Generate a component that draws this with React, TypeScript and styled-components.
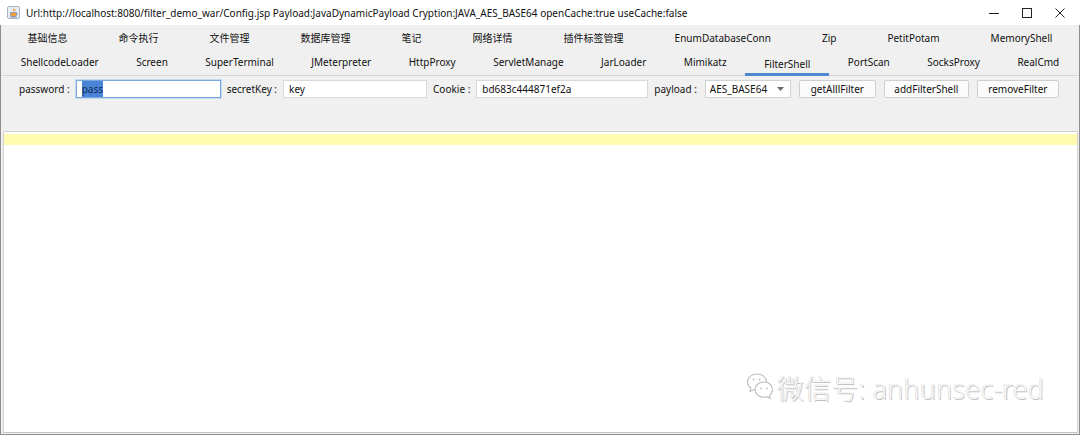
import styled, { createGlobalStyle } from "styled-components";

const GlobalStyle = createGlobalStyle`
  html, body {
    margin: 0;
    padding: 0;
    background: #ffffff;
  }
  body {
    font-family: "Noto Sans", "Noto Sans CJK SC", sans-serif;
    color: #000;
  }
`;

const row1 = [
  "基础信息",
  "命令执行",
  "文件管理",
  "数据库管理",
  "笔记",
  "网络详情",
  "插件标签管理",
  "EnumDatabaseConn",
  "Zip",
  "PetitPotam",
  "MemoryShell",
];

const row2 = [
  "ShellcodeLoader",
  "Screen",
  "SuperTerminal",
  "JMeterpreter",
  "HttpProxy",
  "ServletManage",
  "JarLoader",
  "Mimikatz",
  "FilterShell",
  "PortScan",
  "SocksProxy",
  "RealCmd",
];

const JavaIcon = () => (
  <svg width="13" height="13" viewBox="0 0 13 13">
    <rect x="0.5" y="0.5" width="12" height="12" rx="1.5" fill="#e9eef5" stroke="#a9b4c2" />
    <path d="M6.5 2.5c-1 1 1 1.6 0 2.8M8 3c-.7.7.6 1.1 0 2" stroke="#e07a1f" strokeWidth="0.9" fill="none" />
    <path d="M3.5 6.5h6v2.3c0 1.2-1 1.9-3 1.9s-3-.7-3-1.9z" fill="#f0a040" stroke="#5d7fb0" strokeWidth="0.6" />
    <path d="M9.5 7.2c1 0 1 1.5 0 1.5" stroke="#5d7fb0" strokeWidth="0.6" fill="none" />
    <path d="M3 11h7" stroke="#5d7fb0" strokeWidth="0.7" />
  </svg>
);

const WeChatIcon = () => (
  <svg width="30" height="34" viewBox="0 0 30 34">
    <g fill="#ffffff" stroke="#bdbdbd" strokeWidth="1.1">
      <path d="M11 3C5.5 3 1.5 6.6 1.5 11c0 2.5 1.3 4.6 3.4 6.1L4 20.5l3.8-2c1 .3 2.1.5 3.2.5 5.5 0 9.5-3.6 9.5-8S16.5 3 11 3z" />
      <path d="M18 11c-5.2 0-9 3.4-9 7.6s3.8 7.6 9 7.6c1 0 2-.2 2.9-.5l3.3 1.8-.8-3c1.9-1.4 3.1-3.4 3.1-5.9C26.5 14.4 23.2 11 18 11z" />
    </g>
    <circle cx="7.5" cy="8.5" r="1" fill="#c4c4c4" />
    <circle cx="13.5" cy="8.5" r="1" fill="#c4c4c4" />
    <circle cx="15" cy="17.5" r="0.9" fill="#c4c4c4" />
    <circle cx="21" cy="17.5" r="0.9" fill="#c4c4c4" />
  </svg>
);

export default function App() {
  return (
    <>
      <GlobalStyle />
      <Window>
        <TitleBar>
          <JavaIcon />
          <Title>
            Url:http://localhost:8080/filter_demo_war/Config.jsp Payload:JavaDynamicPayload
            Cryption:JAVA_AES_BASE64 openCache:true useCache:false
          </Title>
          <Controls>
            <CtrlButton>
              <svg width="10" height="10" viewBox="0 0 10 10">
                <path d="M0 5.5h10" stroke="#222" strokeWidth="1" />
              </svg>
            </CtrlButton>
            <CtrlButton>
              <svg width="10" height="10" viewBox="0 0 10 10">
                <rect x="0.5" y="0.5" width="9" height="9" fill="none" stroke="#222" strokeWidth="1" />
              </svg>
            </CtrlButton>
            <CtrlButton>
              <svg width="10" height="10" viewBox="0 0 10 10">
                <path d="M0.5 0.5l9 9M9.5 0.5l-9 9" stroke="#222" strokeWidth="1" />
              </svg>
            </CtrlButton>
          </Controls>
        </TitleBar>

        <Body>
          <TabArea>
            <TabRow>
              {row1.map((t) => (
                <Tab key={t}>{t}</Tab>
              ))}
            </TabRow>
            <TabRow>
              {row2.map((t) => (
                <Tab key={t} $active={t === "FilterShell"}>
                  {t}
                </Tab>
              ))}
            </TabRow>
          </TabArea>

          <FormPanel>
            <Label>password :</Label>
            <Field $width={145} $focused>
              <Selected>pass</Selected>
            </Field>
            <Label>secretKey :</Label>
            <Field $width={144}>key</Field>
            <Label>Cookie :</Label>
            <Field $width={172}>bd683c444871ef2a</Field>
            <Label>payload :</Label>
            <Select>
              <span>AES_BASE64</span>
              <svg width="7" height="4" viewBox="0 0 7 4">
                <path d="M0 0h7L3.5 4z" fill="#6a6a6a" />
              </svg>
            </Select>
            <Button $width={77}>getAlllFilter</Button>
            <Button $width={85}>addFilterShell</Button>
            <Button $width={82}>removeFilter</Button>
          </FormPanel>

          <TextPanel>
            <CurrentLine />
          </TextPanel>
        </Body>

        <Watermark>
          <WeChatIcon />
          <span>微信号: anhunsec-red</span>
        </Watermark>
      </Window>
    </>
  );
}

const Window = styled.div`
  position: relative;
  width: 1080px;
  height: 435px;
  box-sizing: border-box;
  display: flex;
  flex-direction: column;
  background: #f0f0f0;
  overflow: hidden;
`;

const TitleBar = styled.div`
  height: 25px;
  flex: none;
  display: flex;
  align-items: center;
  padding-left: 7px;
  background: #ffffff;
`;

const Title = styled.div`
  margin-left: 6px;
  font-size: 10px;
  white-space: nowrap;
  flex: 1;
  color: #111;
`;

const Controls = styled.div`
  display: flex;
  align-items: center;
  height: 100%;
  padding-right: 4px;
`;

const CtrlButton = styled.div`
  width: 33px;
  height: 100%;
  display: flex;
  align-items: center;
  justify-content: center;
`;

const Body = styled.div`
  flex: 1;
  display: flex;
  flex-direction: column;
  border-left: 1px solid #8e8e8e;
  border-right: 1px solid #8e8e8e;
  border-bottom: 1px solid #8e8e8e;
  min-height: 0;
`;

const TabArea = styled.div`
  padding: 2px 1px 0;
  border-bottom: 1px solid #d6d6d6;
`;

const TabRow = styled.div`
  display: flex;
  height: 24px;
`;

const Tab = styled.div<{ $active?: boolean }>`
  flex: 1 1 auto;
  display: flex;
  align-items: center;
  justify-content: center;
  box-sizing: border-box;
  font-size: 10px;
  white-space: nowrap;
  color: #111;
  padding-top: ${(p) => (p.$active ? "3px" : "0")};
  border-bottom: 3px solid ${(p) => (p.$active ? "#4f86cf" : "transparent")};
  margin-bottom: ${(p) => (p.$active ? "-1px" : "0")};
`;

const FormPanel = styled.div`
  height: 55px;
  flex: none;
  display: flex;
  align-items: flex-start;
  gap: 6px;
  padding: 4px 0 0 18px;
  box-sizing: border-box;
`;

const Label = styled.div`
  height: 18px;
  line-height: 18px;
  font-size: 10px;
  color: #111;
  white-space: nowrap;
`;

const Field = styled.div<{ $width: number; $focused?: boolean }>`
  width: ${(p) => p.$width}px;
  height: 18px;
  box-sizing: border-box;
  background: #ffffff;
  border: 1px solid ${(p) => (p.$focused ? "#7aa7dd" : "#d9d9d9")};
  box-shadow: ${(p) => (p.$focused ? "0 0 0 1px #c3d9f2" : "none")};
  padding: 0 5px;
  font-size: 10px;
  line-height: 16px;
  color: #111;
  white-space: nowrap;
`;

const Selected = styled.span`
  background: #4b84d6;
  color: #0e2b57;
  padding: 1px 0;
`;

const Select = styled.div`
  width: 86px;
  height: 18px;
  box-sizing: border-box;
  margin-left: 2px;
  background: #ffffff;
  border: 1px solid #d2d2d2;
  display: flex;
  align-items: center;
  justify-content: space-between;
  padding: 0 6px 0 4px;
  font-size: 10px;
  color: #111;
`;

const Button = styled.div<{ $width: number }>`
  width: ${(p) => p.$width}px;
  height: 18px;
  box-sizing: border-box;
  margin-left: 2px;
  background: #fbfbfb;
  border: 1px solid #cfcfcf;
  border-radius: 2px;
  display: flex;
  align-items: center;
  justify-content: center;
  font-size: 10px;
  color: #111;
  white-space: nowrap;
`;

const TextPanel = styled.div`
  flex: 1;
  margin: 0 1px 1px 2px;
  background: #ffffff;
  border: 1px solid #d2d2d2;
  border-bottom-color: #c4c4c4;
  padding-top: 2px;
`;

const CurrentLine = styled.div`
  height: 11px;
  background: #fffcb0;
`;

const Watermark = styled.div`
  position: absolute;
  left: 746px;
  top: 368px;
  display: flex;
  align-items: center;
  gap: 1px;
  font-family: "Noto Sans", "Noto Sans CJK SC", sans-serif;
  font-weight: 300;
  font-size: 27px;
  letter-spacing: 0.2px;
  color: #f7f7f7;
  text-shadow: 0.8px 0.8px 0 #c2c2c2, -0.5px -0.5px 0 #dadada;
  white-space: nowrap;
`;
